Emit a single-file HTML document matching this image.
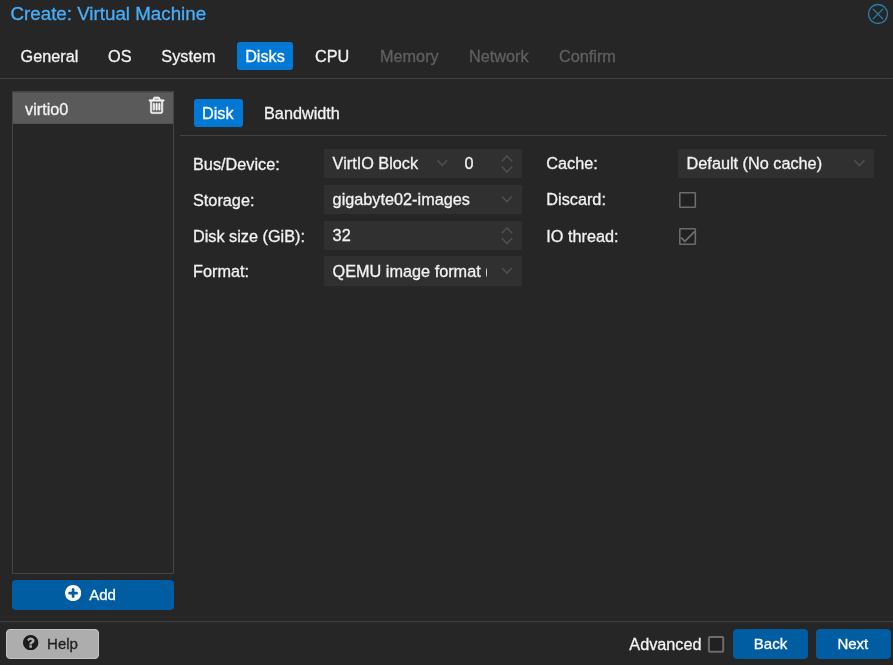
<!DOCTYPE html>
<html><head><meta charset="utf-8">
<style>
*{box-sizing:border-box;margin:0;padding:0}
html,body{width:893px;height:665px;overflow:hidden;background:#262626;font-family:"Liberation Sans",Arial,Helvetica,sans-serif;color:#f2f2f2;font-size:16.25px;will-change:transform;-webkit-text-stroke:0.3px}
.abs{position:absolute}
#title{left:10.5px;top:2.75px;font-size:18.75px;line-height:22px;color:#49aefa;white-space:nowrap}
.tab{top:43px;height:27px;line-height:27px;white-space:nowrap;color:#f2f2f2;text-align:center}
.tab.dis{color:#606060}
.tab.act{background:#0078d4;border-radius:3px;color:#fff}
.hline{height:1px;background:#404040}
.lbl{line-height:20px;white-space:nowrap;color:#f2f2f2}
.fld{background:#303030;height:29px;line-height:29px;white-space:nowrap;overflow:hidden;color:#f2f2f2}
.btn{border-radius:4px;color:#fff;text-align:center;white-space:nowrap}
.cb{width:16px;height:16px;border:1px solid #7a7a7a;background:#262626}
</style></head><body>
<div class="abs" id="title">Create: Virtual Machine</div>
<svg class="abs" style="left:867px;top:3px" width="22" height="22" viewBox="0 0 22 22"><circle cx="11" cy="11" r="9.5" fill="none" stroke="#2a80b0" stroke-width="1.3"/><path d="M5.900 5.900L16.100 16.100M16.100 5.900L5.900 16.100" stroke="#2a80b0" stroke-width="1.200" fill="none"/></svg>

<div class="abs tab" style="left:20.500px">General</div>
<div class="abs tab" style="left:108px">OS</div>
<div class="abs tab" style="left:161.300px">System</div>
<div class="abs tab act" style="left:237px;top:42px;height:28px;padding-top:1px;width:56px">Disks</div>
<div class="abs tab" style="left:315px">CPU</div>
<div class="abs tab dis" style="left:380px">Memory</div>
<div class="abs tab dis" style="left:469px">Network</div>
<div class="abs tab dis" style="left:559px">Confirm</div>
<div class="abs hline" style="left:0;top:78px;width:893px"></div>

<!-- left panel -->
<div class="abs" style="left:12px;top:91px;width:162px;height:483px;border:1px solid #454545"></div>
<div class="abs" style="left:13px;top:92px;width:160px;height:32px;background:#5a5a5a;border-top:1px solid #4e4e4e;border-bottom:1px solid #505050"></div>
<div class="abs lbl" style="left:25px;top:99px">virtio0</div>
<svg class="abs" style="left:148.900px;top:97.300px;overflow:visible" width="15.200" height="16.600" viewBox="0 0 1408 1536"><path transform="translate(0,1408) scale(1,-1)" fill="#f2f2f2" stroke="#f2f2f2" stroke-width="60" d="M512 800v-576q0 -14 -9 -23t-23 -9h-64q-14 0 -23 9t-9 23v576q0 14 9 23t23 9h64q14 0 23 -9t9 -23zM768 800v-576q0 -14 -9 -23t-23 -9h-64q-14 0 -23 9t-9 23v576q0 14 9 23t23 9h64q14 0 23 -9t9 -23zM1024 800v-576q0 -14 -9 -23t-23 -9h-64q-14 0 -23 9t-9 23v576q0 14 9 23t23 9h64q14 0 23 -9t9 -23zM1152 76v948h-896v-948q0 -22 7 -40.500t14.500 -27t10.500 -8.500h832q3 0 10.500 8.500t14.500 27t7 40.500zM480 1152h448l-48 117q-7 9 -17 11h-317q-10 -2 -17 -11zM1408 1120v-64q0 -14 -9 -23t-23 -9h-96v-948q0 -83 -47 -143.500t-113 -60.500h-832q-66 0 -113 58.500t-47 141.500v952h-96q-14 0 -23 9t-9 23v64q0 14 9 23t23 9h309l70 167q15 37 54 63t79 26h320q40 0 79 -26t54 -63l70 -167h309q14 0 23 -9t9 -23z"/></svg>

<div class="abs btn" style="left:12px;top:580px;width:162px;height:30px;background:#015da2"></div>
<svg class="abs" style="left:64.950px;top:584.900px" width="16.200" height="16.200" viewBox="0 0 1536 1536"><path transform="translate(0,1408) scale(1,-1)" fill="#fff" d="M1216 576v128q0 26 -19 45t-45 19h-256v256q0 26 -19 45t-45 19h-128q-26 0 -45 -19t-19 -45v-256h-256q-26 0 -45 -19t-19 -45v-128q0 -26 19 -45t45 -19h256v-256q0 -26 19 -45t45 -19h128q26 0 45 19t19 45v256h256q26 0 45 19t19 45zM1536 640q0 -209 -103 -385.500t-279.500 -279.500t-385.500 -103t-385.500 103t-279.500 279.500t-103 385.500t103 385.500t279.500 279.500t385.500 103t385.500 -103t279.500 -279.500t103 -385.500z"/></svg>
<div class="abs" style="left:89.200px;top:584.500px;font-size:15px;line-height:20px;color:#fff">Add</div>

<!-- sub tabs -->
<div class="abs tab act" style="left:194px;top:99px;width:49px;height:28px;line-height:29px;padding-right:1.5px">Disk</div>
<div class="abs tab" style="left:264px;top:99px;height:28px;line-height:29px">Bandwidth</div>
<div class="abs hline" style="left:180px;top:135px;width:707px"></div>

<!-- form left -->
<div class="abs lbl" style="left:193px;top:154px">Bus/Device:</div>
<div class="abs lbl" style="left:193px;top:190px">Storage:</div>
<div class="abs lbl" style="left:193px;top:226px">Disk size (GiB):</div>
<div class="abs lbl" style="left:193px;top:261px">Format:</div>

<div class="abs fld" style="left:324px;top:149px;width:198px;padding-left:8.600px">VirtIO Block</div>
<div class="abs" style="left:464.5px;top:149px;line-height:29px">0</div>
<div class="abs fld" style="left:324px;top:185px;width:198px;padding-left:8.600px">gigabyte02-images</div>
<div class="abs fld" style="left:324px;top:221px;width:198px;padding-left:8.600px">32</div>
<div class="abs fld" style="left:324px;top:256px;height:30px;padding-top:1px;width:198px;padding-left:8.600px"><span style="display:inline-block;width:154px;overflow:hidden;vertical-align:top">QEMU image format (qcow2)</span></div>

<!-- form right -->
<div class="abs lbl" style="left:546.3px;top:153px">Cache:</div>
<div class="abs lbl" style="left:546.3px;top:189px">Discard:</div>
<div class="abs lbl" style="left:546.3px;top:226px">IO thread:</div>
<div class="abs fld" style="left:678px;top:149px;width:196px;padding-left:8.600px">Default (No cache)</div>
<svg class="abs" style="left:0;top:0;pointer-events:none" width="893" height="665" fill="none" stroke="#4e4e4e" stroke-width="1.6">
<path d="M437.500 160.300l4.800 5 4.800-5"/>
<path d="M501.800 161.500l5.200-5.500 5.200 5.500M501.800 166.500l5.200 5.500 5.200-5.500"/>
<path d="M502 196.500l5 5 5-5"/>
<path d="M501.800 233.300l5.200-5.500 5.200 5.500M501.800 238l5.200 5.500 5.200-5.500"/>
<path d="M502 268l5 5 5-5"/>
<path d="M854.400 160.300l5 5.200 5-5.200"/>
<g stroke="#6c6c6c" stroke-width="1.600" fill="#212121">
<rect x="679.800" y="192.700" width="15.500" height="14.600" rx="0.600"/>
<rect x="679.800" y="228.800" width="15.500" height="15.500" rx="0.600"/>
<rect x="708.900" y="637.100" width="14.300" height="14.700" rx="1" stroke-width="2"/>
<path d="M681.200 237.700L684.800 241.400L694.800 231.400" fill="none" stroke-width="1.900"/>
</g>
</svg>

<!-- bottom bar -->
<div class="abs hline" style="left:0;top:621px;width:893px"></div>
<div class="abs" style="left:6px;top:629px;width:93px;height:30px;background:#adadad;border:1px solid #c4c4c4;border-radius:4px"></div>
<svg class="abs" style="left:23.300px;top:634.800px" width="15.300" height="15.300" viewBox="0 0 1536 1536"><path transform="translate(0,1408) scale(1,-1)" fill="#1c1c1c" d="M896 160v192q0 14 -9 23t-23 9h-192q-14 0 -23 -9t-9 -23v-192q0 -14 9 -23t23 -9h192q14 0 23 9t9 23zM1152 832q0 88 -55.500 163t-138.500 116t-170 41q-243 0 -371 -213q-15 -24 8 -42l132 -100q7 -6 19 -6q16 0 25 12q53 68 86 92q34 24 86 24q48 0 85.500 -26t37.500 -59q0 -38 -20 -61t-68 -45q-63 -28 -115.500 -86.500t-52.500 -125.500v-36q0 -14 9 -23t23 -9h192q14 0 23 9t9 23q0 19 21.500 49.500t54.500 49.500q32 18 49 28.500t46 35t44.500 48t28 60.500t12.500 81zM1536 640q0 -209 -103 -385.500t-279.500 -279.500t-385.500 -103t-385.500 103t-279.500 279.500t-103 385.500t103 385.500t279.500 279.500t385.500 103t385.500 -103t279.500 -279.500t103 -385.500z"/></svg>
<div class="abs" style="left:47.100px;top:633.500px;font-size:15px;line-height:20px;color:#1e1e1e">Help</div>

<div class="abs lbl" style="left:629.300px;top:634px">Advanced</div>
<div class="abs btn" style="left:733px;top:629px;width:75px;height:30px;background:#015da2"></div>
<div class="abs" style="left:753.800px;top:633.800px;font-size:15px;line-height:20px;color:#fff">Back</div>
<div class="abs btn" style="left:816px;top:629px;width:75px;height:30px;background:#015da2"></div>
<div class="abs" style="left:837.400px;top:633.800px;font-size:15px;line-height:20px;color:#fff">Next</div>
</body></html>
